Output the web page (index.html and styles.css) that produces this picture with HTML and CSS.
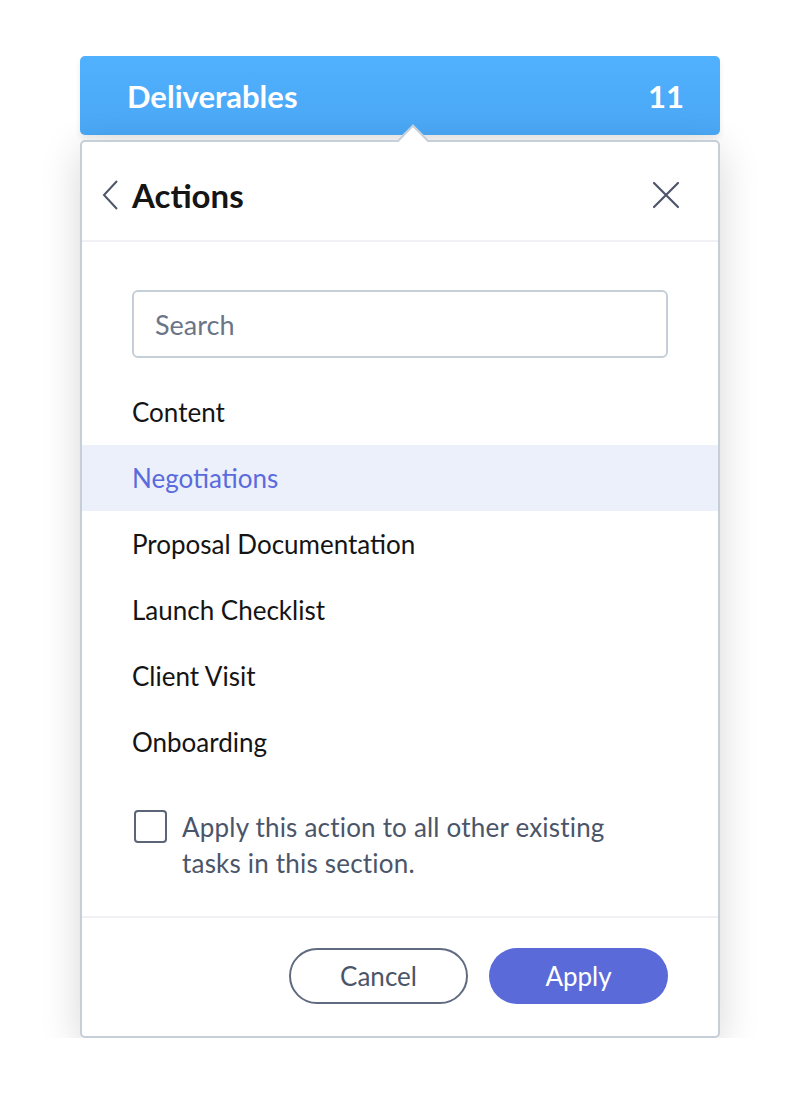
FILE: index.html
```html
<!DOCTYPE html>
<html>
<head>
<meta charset="utf-8">
<link rel="stylesheet" href="styles.css">
</head>
<body>
<div class="wrap">
  <div class="section-bar">
    <span class="section-name">Deliverables</span>
    <span class="section-count">11</span>
  </div>
  <div class="panel">
    <span class="notch"></span>
    <div class="panel-head">
      <svg class="back" width="18" height="30" viewBox="0 0 18 30"><path d="M15 1 L2 15 L15 29" fill="none" stroke="#4d5568" stroke-width="2"/></svg>
      <h1 class="title">Actions</h1>
      <svg class="close" width="28" height="28" viewBox="0 0 28 28"><path d="M2 2 L26 26 M26 2 L2 26" fill="none" stroke="#4d5568" stroke-width="2.2" stroke-linecap="round"/></svg>
    </div>
    <div class="panel-body">
      <div class="search">Search</div>
      <ul class="list">
        <li>Content</li>
        <li class="active">Negotiations</li>
        <li>Proposal Documentation</li>
        <li>Launch Checklist</li>
        <li>Client Visit</li>
        <li>Onboarding</li>
      </ul>
      <label class="check">
        <span class="box"></span>
        <span class="check-text">Apply this action to all other existing tasks in this section.</span>
      </label>
    </div>
    <div class="panel-foot">
      <button class="btn btn-cancel">Cancel</button>
      <button class="btn btn-apply">Apply</button>
    </div>
  </div>
</div>
</body>
</html>
```

FILE: styles.css
```css
* { box-sizing: border-box; }
body {
  margin: 0;
  background: #ffffff;
  font-family: Lato, "Open Sans", sans-serif;
}
.wrap {
  width: 640px;
  margin: 56px 0 0 80px;
}
.section-bar {
  height: 79px;
  border-radius: 5px;
  background: linear-gradient(#50b1fe, #4aa7f5);
  display: flex;
  align-items: center;
  justify-content: space-between;
  padding: 0 36px 0 47px;
  color: #fff;
  font-weight: 700;
  font-size: 31px;
  box-shadow: 0 4px 6px rgba(0,0,0,0.08);
}
.section-count { font-size: 31px; }
.panel {
  position: relative;
  margin-top: 5px;
  background: #fff;
  border: 2px solid #c6ced8;
  border-radius: 5px;
  box-shadow: 0 10px 40px rgba(0,0,0,0.16);
}
.notch {
  position: absolute;
  top: -13px;
  left: 320px;
  width: 22px;
  height: 22px;
  background: #fff;
  border-left: 2px solid #c6ced8;
  border-top: 2px solid #c6ced8;
  transform: rotate(45deg);
}
.panel-head {
  position: relative;
  height: 100px;
  display: flex;
  align-items: center;
  padding: 7px 38px 0 20px;
  border-bottom: 2px solid #eff1f4;
}
.back { margin-right: 12px; margin-top: 0; }
.title {
  margin: 0;
  flex: 1;
  font-size: 33px;
  font-weight: 700;
  color: #151515;
}
.panel-body {
  padding: 48px 0 35px;
  border-bottom: 2px solid #eff1f4;
}
.search {
  margin: 0 50px;
  height: 68px;
  border: 2px solid #c6ced8;
  border-radius: 6px;
  display: flex;
  align-items: center;
  padding-left: 21px;
  font-size: 27px;
  color: #6b7587;
}
.list {
  list-style: none;
  margin: 21px 0 0;
  padding: 0;
}
.list li {
  height: 66px;
  display: flex;
  align-items: center;
  padding-left: 50px;
  font-size: 26px;
  color: #141414;
}
.list li.active {
  background: #ecf0fb;
  color: #5a6bdd;
}
.check {
  display: flex;
  align-items: flex-start;
  margin: 34px 50px 0 52px;
}
.box {
  flex: none;
  width: 33px;
  height: 33px;
  border: 2px solid #5c6578;
  border-radius: 4px;
  margin-top: 1px;
  margin-right: 15px;
}
.check-text {
  font-size: 26px;
  line-height: 36px;
  letter-spacing: 0.2px;
  color: #4b5569;
  width: 460px;
  margin-top: 0;
}
.panel-foot {
  display: flex;
  justify-content: flex-end;
  gap: 21px;
  padding: 30px 50px 32px;
}
.btn {
  width: 179px;
  height: 56px;
  border-radius: 28px;
  font-family: Lato, "Open Sans", sans-serif;
  font-size: 26px;
}
.btn-cancel {
  background: #fff;
  border: 2px solid #616b80;
  color: #4b5569;
}
.btn-apply {
  background: #5a6bd9;
  border: none;
  color: #fff;
}
```
